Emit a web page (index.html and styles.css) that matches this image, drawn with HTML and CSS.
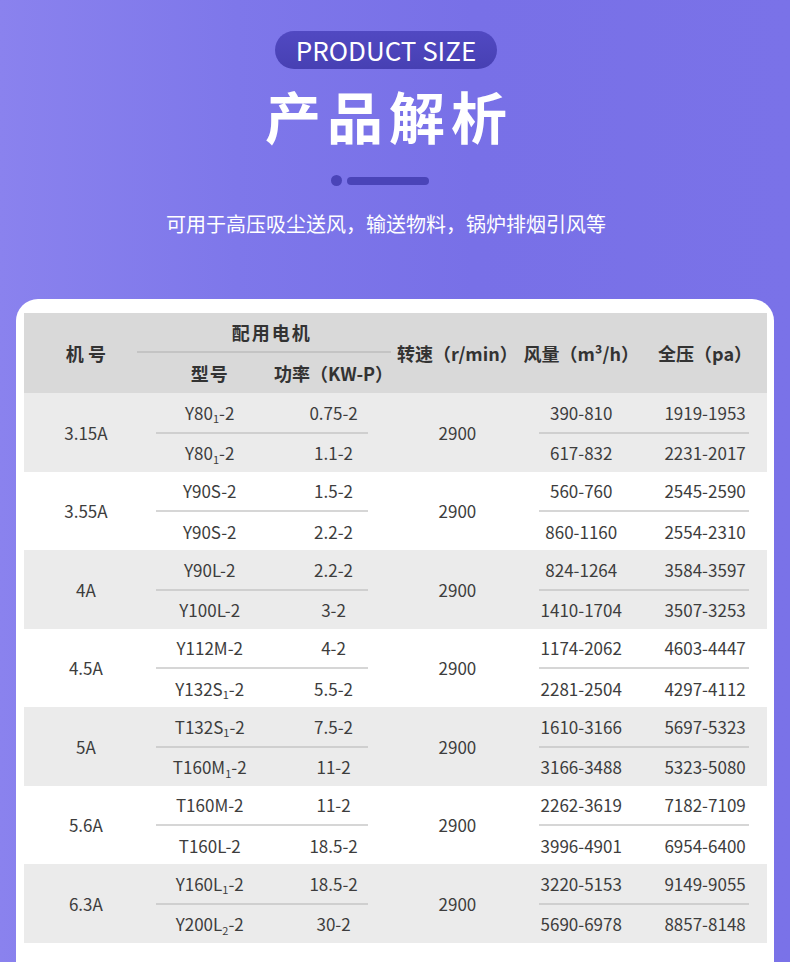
FILE: index.html
```html
<!DOCTYPE html>
<html lang="zh-CN">
<head>
<meta charset="utf-8">
<title>产品解析</title>
<link rel="stylesheet" href="styles.css">
</head>
<body>
<div class="page">
  <header class="hero">
    <div class="pill">PRODUCT SIZE</div>
    <h1 class="title">产品解析</h1>
    <div class="dots"><span class="dot"></span><span class="bar"></span></div>
    <p class="subtitle">可用于高压吸尘送风，输送物料，锅炉排烟引风等</p>
  </header>

  <section class="card">
    <div class="table">
      <div class="thead">
        <div class="th c1 span-all">机 号</div>
        <div class="th motor">配用电机</div>
        <div class="hline"></div>
        <div class="th sub-model">型号</div>
        <div class="th sub-power">功率（KW-P）</div>
        <div class="th c4 span-all">转速（r/min）</div>
        <div class="th c5 span-all">风量（m³/h）</div>
        <div class="th c6 span-all">全压（pa）</div>
      </div>

      <div class="group grey">
        <div class="td c1 span-all">3.15A</div>
        <div class="td r1 c2">Y80<span class="sb">1</span>-2</div>
        <div class="td r1 c3">0.75-2</div>
        <div class="line l-left"></div>
        <div class="td r2 c2">Y80<span class="sb">1</span>-2</div>
        <div class="td r2 c3">1.1-2</div>
        <div class="td c4 span-all">2900</div>
        <div class="td r1 c5">390-810</div>
        <div class="td r1 c6">1919-1953</div>
        <div class="line l-right"></div>
        <div class="td r2 c5">617-832</div>
        <div class="td r2 c6">2231-2017</div>
      </div>

      <div class="group">
        <div class="td c1 span-all">3.55A</div>
        <div class="td r1 c2">Y90S-2</div>
        <div class="td r1 c3">1.5-2</div>
        <div class="line l-left"></div>
        <div class="td r2 c2">Y90S-2</div>
        <div class="td r2 c3">2.2-2</div>
        <div class="td c4 span-all">2900</div>
        <div class="td r1 c5">560-760</div>
        <div class="td r1 c6">2545-2590</div>
        <div class="line l-right"></div>
        <div class="td r2 c5">860-1160</div>
        <div class="td r2 c6">2554-2310</div>
      </div>

      <div class="group grey">
        <div class="td c1 span-all">4A</div>
        <div class="td r1 c2">Y90L-2</div>
        <div class="td r1 c3">2.2-2</div>
        <div class="line l-left"></div>
        <div class="td r2 c2">Y100L-2</div>
        <div class="td r2 c3">3-2</div>
        <div class="td c4 span-all">2900</div>
        <div class="td r1 c5">824-1264</div>
        <div class="td r1 c6">3584-3597</div>
        <div class="line l-right"></div>
        <div class="td r2 c5">1410-1704</div>
        <div class="td r2 c6">3507-3253</div>
      </div>

      <div class="group">
        <div class="td c1 span-all">4.5A</div>
        <div class="td r1 c2">Y112M-2</div>
        <div class="td r1 c3">4-2</div>
        <div class="line l-left"></div>
        <div class="td r2 c2">Y132S<span class="sb">1</span>-2</div>
        <div class="td r2 c3">5.5-2</div>
        <div class="td c4 span-all">2900</div>
        <div class="td r1 c5">1174-2062</div>
        <div class="td r1 c6">4603-4447</div>
        <div class="line l-right"></div>
        <div class="td r2 c5">2281-2504</div>
        <div class="td r2 c6">4297-4112</div>
      </div>

      <div class="group grey">
        <div class="td c1 span-all">5A</div>
        <div class="td r1 c2">T132S<span class="sb">1</span>-2</div>
        <div class="td r1 c3">7.5-2</div>
        <div class="line l-left"></div>
        <div class="td r2 c2">T160M<span class="sb">1</span>-2</div>
        <div class="td r2 c3">11-2</div>
        <div class="td c4 span-all">2900</div>
        <div class="td r1 c5">1610-3166</div>
        <div class="td r1 c6">5697-5323</div>
        <div class="line l-right"></div>
        <div class="td r2 c5">3166-3488</div>
        <div class="td r2 c6">5323-5080</div>
      </div>

      <div class="group">
        <div class="td c1 span-all">5.6A</div>
        <div class="td r1 c2">T160M-2</div>
        <div class="td r1 c3">11-2</div>
        <div class="line l-left"></div>
        <div class="td r2 c2">T160L-2</div>
        <div class="td r2 c3">18.5-2</div>
        <div class="td c4 span-all">2900</div>
        <div class="td r1 c5">2262-3619</div>
        <div class="td r1 c6">7182-7109</div>
        <div class="line l-right"></div>
        <div class="td r2 c5">3996-4901</div>
        <div class="td r2 c6">6954-6400</div>
      </div>

      <div class="group grey">
        <div class="td c1 span-all">6.3A</div>
        <div class="td r1 c2">Y160L<span class="sb">1</span>-2</div>
        <div class="td r1 c3">18.5-2</div>
        <div class="line l-left"></div>
        <div class="td r2 c2">Y200L<span class="sb">2</span>-2</div>
        <div class="td r2 c3">30-2</div>
        <div class="td c4 span-all">2900</div>
        <div class="td r1 c5">3220-5153</div>
        <div class="td r1 c6">9149-9055</div>
        <div class="line l-right"></div>
        <div class="td r2 c5">5690-6978</div>
        <div class="td r2 c6">8857-8148</div>
      </div>
    </div>
  </section>
</div>
</body>
</html>
```

FILE: styles.css
```css
* { box-sizing: border-box; }
html, body { margin: 0; padding: 0; }
body {
  width: 790px;
  height: 962px;
  overflow: hidden;
  font-family: "Noto Sans CJK SC", "Noto Sans", sans-serif;
  background: linear-gradient(90deg, #8a82ee 0%, #7e77ea 30%, #7870e7 60%, #7a72e8 100%);
}
.page {
  width: 790px;
  height: 962px;
  display: flex;
  flex-direction: column;
}
.hero {
  display: flex;
  flex-direction: column;
  align-items: center;
  padding: 31px 18px 0 0;
  height: 299px;
}
.pill {
  width: 222px;
  height: 38px;
  border-radius: 19px;
  background: linear-gradient(180deg, #5149c2 0%, #4740b3 100%);
  color: #fff;
  font-size: 26px;
  line-height: 38px;
  text-align: center;
}
.title {
  margin: 14px 0 0;
  color: #fff;
  font-size: 56px;
  font-weight: 700;
  line-height: 64px;
  letter-spacing: 6px;
  padding-left: 6px;
}
.dots {
  margin: 28px 12px 0 0;
  display: flex;
  align-items: center;
  gap: 5px;
}
.dot {
  width: 11px;
  height: 11px;
  border-radius: 50%;
  background: #4a44b8;
}
.bar {
  width: 82px;
  height: 8px;
  border-radius: 4px;
  background: #4a44b8;
}
.subtitle {
  margin: 24px 0 0;
  color: #fff;
  font-size: 20px;
  line-height: 28px;
}
.card {
  flex: 1;
  margin: 0 16px;
  background: #fff;
  border-radius: 22px 22px 0 0;
  padding: 14px 7px 0 8px;
}
.table {
  width: 743px;
  color: #3d3d3d;
}
.thead {
  display: grid;
  grid-template-columns: repeat(6, 1fr);
  grid-template-rows: 38px 2px 40px;
  background: #d9d9d9;
  color: #333;
}
.th {
  display: flex;
  align-items: center;
  justify-content: center;
  font-size: 18px;
  font-weight: 700;
  white-space: nowrap;
}
.span-all { grid-row: 1 / 4; }
.c1 { grid-column: 1; }
.c2 { grid-column: 2; }
.c3 { grid-column: 3; }
.c4 { grid-column: 4; }
.c5 { grid-column: 5; }
.c6 { grid-column: 6; }
.motor { grid-column: 2 / 4; grid-row: 1; letter-spacing: 2px; }
.hline {
  grid-column: 2 / 4;
  grid-row: 2;
  margin: 0 5px 0 -11px;
  background: #c4c4c4;
}
.sub-model { grid-column: 2; grid-row: 3; letter-spacing: 1px; }
.sub-power { grid-column: 3; grid-row: 3; }

.group {
  display: grid;
  grid-template-columns: repeat(6, 1fr);
  grid-template-rows: 38.5px 2px 38px;
  background: #fff;
}
.group.grey { background: #ebebeb; }
.td {
  display: flex;
  align-items: center;
  justify-content: center;
  font-size: 17px;
  white-space: nowrap;
}
.r1 { grid-row: 1; }
.r2 { grid-row: 3; }
.line { grid-row: 2; background: #d6d6d6; }
.group.grey .line { background: #cfcfcf; }
.l-left { grid-column: 2 / 4; margin: 0 28px 0 8px; }
.l-right { grid-column: 5 / 7; margin: 0 18px 0 20px; }
.sb {
  font-size: 11px;
  line-height: 0;
  position: relative;
  top: 6px;
}
```
